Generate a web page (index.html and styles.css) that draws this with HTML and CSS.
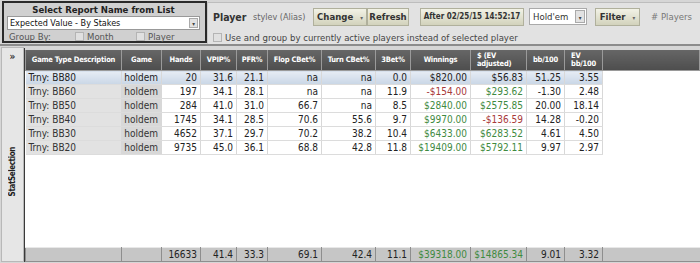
FILE: index.html
```html
<!DOCTYPE html>
<html lang="en">
<head>
  <meta charset="UTF-8">
  <title>Stats</title>
  <link rel="stylesheet" href="styles.css">
</head>
<body>
  <div class="topbar">
    <div class="report-box">
      <div class="report-title">Select Report Name from List</div>
      <div class="report-select">Expected Value - By Stakes<span class="drop">&#9662;</span></div>
      <div class="group-row">
        <span class="group-label">Group By:</span>
        <span class="check"></span><span class="check-label">Month</span>
        <span class="check check-2"></span><span class="check-label">Player</span>
      </div>
    </div>
    <div class="player-panel">
      <div class="player-row">
        <span class="player-label">Player</span>
        <span class="player-name">stylev (Alias)</span>
        <span class="btn btn-change">Change <span class="caret">&#9662;</span></span>
        <span class="btn btn-refresh">Refresh</span>
        <span class="btn btn-date">After 02/25/15 14:52:17</span>
        <span class="game-select">Hold'em<span class="drop">&#9662;</span></span>
        <span class="btn btn-filter">Filter <span class="caret">&#9662;</span></span>
        <span class="players">&#35; Players</span>
      </div>
      <div class="use-row">
        <span class="check"></span>
        <span class="use-label">Use and group by currently active players instead of selected player</span>
      </div>
    </div>
  </div>

  <div class="main">
    <div class="strip">
      <div class="strip-arrow">&raquo;</div>
      <div class="strip-text"><span>StatSelection</span></div>
    </div>
    <div class="grid">
      <table class="stats">
        <colgroup>
          <col style="width:96px"><col style="width:40px"><col style="width:39px"><col style="width:36px">
          <col style="width:31px"><col style="width:54px"><col style="width:54px"><col style="width:35px">
          <col style="width:60px"><col style="width:56px"><col style="width:38px"><col style="width:38px"><col>
        </colgroup>
        <thead>
          <tr>
            <th>Game Type Description</th><th>Game</th><th>Hands</th><th>VPIP%</th><th>PFR%</th>
            <th>Flop CBet%</th><th>Turn CBet%</th><th>3Bet%</th><th>Winnings</th>
            <th class="left">$ (EV<br>adjusted)</th><th>bb/100</th><th class="left">EV<br>bb/100</th><th></th>
          </tr>
        </thead>
        <tbody>
          <tr class="selected">
            <td class="desc">Trny: BB80</td><td class="game">holdem</td><td>20</td><td>31.6</td><td>21.1</td>
            <td>na</td><td>na</td><td>0.0</td><td>$820.00</td><td>$56.83</td><td>51.25</td><td>3.55</td><td class="empty"></td>
          </tr>
          <tr>
            <td class="desc">Trny: BB60</td><td class="game">holdem</td><td>197</td><td>34.1</td><td>28.1</td>
            <td>na</td><td>na</td><td>11.9</td><td class="neg">-$154.00</td><td class="pos">$293.62</td><td>-1.30</td><td>2.48</td><td class="empty"></td>
          </tr>
          <tr>
            <td class="desc">Trny: BB50</td><td class="game">holdem</td><td>284</td><td>41.0</td><td>31.0</td>
            <td>66.7</td><td>na</td><td>8.5</td><td class="pos">$2840.00</td><td class="pos">$2575.85</td><td>20.00</td><td>18.14</td><td class="empty"></td>
          </tr>
          <tr>
            <td class="desc">Trny: BB40</td><td class="game">holdem</td><td>1745</td><td>34.1</td><td>28.5</td>
            <td>70.6</td><td>55.6</td><td>9.7</td><td class="pos">$9970.00</td><td class="neg">-$136.59</td><td>14.28</td><td>-0.20</td><td class="empty"></td>
          </tr>
          <tr>
            <td class="desc">Trny: BB30</td><td class="game">holdem</td><td>4652</td><td>37.1</td><td>29.7</td>
            <td>70.2</td><td>38.2</td><td>10.4</td><td class="pos">$6433.00</td><td class="pos">$6283.52</td><td>4.61</td><td>4.50</td><td class="empty"></td>
          </tr>
          <tr>
            <td class="desc">Trny: BB20</td><td class="game">holdem</td><td>9735</td><td>45.0</td><td>36.1</td>
            <td>68.8</td><td>42.8</td><td>11.8</td><td class="pos">$19409.00</td><td class="pos">$5792.11</td><td>9.97</td><td>2.97</td><td class="empty"></td>
          </tr>
        </tbody>
      </table>
      <div class="filler"></div>
      <table class="totals">
        <colgroup>
          <col style="width:96px"><col style="width:40px"><col style="width:39px"><col style="width:36px">
          <col style="width:31px"><col style="width:54px"><col style="width:54px"><col style="width:35px">
          <col style="width:60px"><col style="width:56px"><col style="width:38px"><col style="width:38px"><col>
        </colgroup>
        <tr>
          <td></td><td></td><td>16633</td><td>41.4</td><td>33.3</td><td>69.1</td><td>42.4</td><td>11.1</td>
          <td class="pos">$39318.00</td><td class="pos">$14865.34</td><td>9.01</td><td>3.32</td><td class="rest"></td>
        </tr>
      </table>
    </div>
  </div>
</body>
</html>
```

FILE: styles.css
```css
body {
  margin: 0;
  width: 700px;
  height: 263px;
  overflow: hidden;
  background-color: #d6d6d6;
  font-family: "DejaVu Sans Condensed", "Liberation Sans", sans-serif;
  font-size: 10px;
  color: #222;
}
.topbar {
  display: flex;
  height: 44px;
  border-bottom: 2px solid #8c8c8c;
  background-color: #d6d6d6;
}
.report-box {
  box-sizing: border-box;
  flex-shrink: 0;
  width: 205px;
  height: 42px;
  margin: 1px 0 0 2px;
  border: 2px solid #2a2a2a;
  background-color: #d0d0d0;
  padding: 0 5px 0 3px;
}
.report-title {
  text-align: center;
  font-weight: bold;
  font-size: 9.5px;
  line-height: 13px;
  color: #222;
}
.report-select {
  position: relative;
  height: 12px;
  line-height: 12px;
  background-color: #fff;
  border: 1px solid #999;
  padding-left: 2px;
  font-size: 9px;
  color: #111;
}
.drop {
  position: absolute;
  right: 1px;
  top: 1px;
  width: 9px;
  height: 10px;
  line-height: 10px;
  background-color: #e2e2e2;
  border: 1px solid #aaa;
  box-sizing: border-box;
  font-size: 6px;
  text-align: center;
  color: #444;
}
.group-row {
  display: flex;
  align-items: center;
  height: 13px;
  color: #555;
  font-size: 9.5px;
}
.group-label {
  width: 66px;
  padding-left: 2px;
}
.check {
  flex-shrink: 0;
  display: inline-block;
  width: 7px;
  height: 7px;
  border: 1px solid #b4b4b4;
  background-color: #e0e0e0;
  margin-right: 3px;
}
.check-label {
  width: 44px;
}
.check-2 {
  margin-left: 5px;
}
.player-panel {
  flex: 1;
  margin: 2px 0 0 0;
  padding-left: 5px;
  background-color: #e2e2e2;
  border-top: 1px solid #bdbdbd;
  border-left: 1px solid #c8c8c8;
}
.player-row {
  display: flex;
  align-items: center;
  height: 27px;
}
.player-row > span {
  flex-shrink: 0;
}
.player-label {
  font-weight: bold;
  font-size: 10.5px;
  color: #333;
  width: 40px;
}
.player-name {
  color: #666;
  font-size: 9px;
  width: 60px;
}
.btn {
  box-sizing: border-box;
  height: 18px;
  line-height: 16px;
  border: 1px solid #b0b09c;
  background: linear-gradient(#f2f2e6, #d2d2bc);
  font-weight: bold;
  font-size: 9.5px;
  color: #333;
  text-align: center;
}
.btn-change {
  width: 54px;
}
.btn-refresh {
  width: 42px;
}
.btn-date {
  width: 104px;
  margin-left: 11px;
  font-size: 8px;
}
.btn-filter {
  width: 45px;
  margin-left: 8px;
}
.caret {
  font-size: 6px;
  color: #666;
  margin-left: 4px;
}
.game-select {
  position: relative;
  box-sizing: border-box;
  width: 58px;
  height: 17px;
  line-height: 15px;
  margin-left: 5px;
  padding-left: 3px;
  background-color: #fff;
  border: 1px solid #aaa;
  font-size: 9.5px;
  color: #333;
}
.game-select .drop {
  height: 13px;
  line-height: 13px;
  width: 10px;
}
.players {
  margin-left: 11px;
  color: #777;
  font-size: 9.5px;
}
.use-row {
  display: flex;
  align-items: center;
  height: 14px;
  color: #444;
  font-size: 9.5px;
}
.main {
  display: flex;
  height: 217px;
}
.strip {
  box-sizing: border-box;
  width: 23px;
  height: 215px;
  margin: 1px 0 0 1px;
  display: flex;
  flex-direction: column;
  background-color: #e6e6e6;
  border: 1px solid #b8b8b8;
}
.strip-arrow {
  height: 18px;
  line-height: 18px;
  text-align: center;
  font-weight: bold;
  font-size: 10px;
  color: #333;
}
.strip-text {
  flex: 1;
  display: flex;
  align-items: center;
  justify-content: center;
  padding-top: 16px;
}
.strip-text span {
  writing-mode: vertical-rl;
  transform: rotate(180deg);
  font-weight: bold;
  font-size: 8px;
  letter-spacing: -0.4px;
  color: #222;
}
.grid {
  flex: 1;
  display: flex;
  flex-direction: column;
  height: 214px;
  margin-top: 2px;
  background-color: #fff;
  border-left: 1px solid #3a3a3a;
}
table {
  width: 100%;
  table-layout: fixed;
  border-collapse: collapse;
}
.stats th {
  height: 20px;
  padding: 0;
  background: linear-gradient(#666, #4e4e4e);
  border: 1px solid #9a9a9a;
  border-top: 2px solid #d6d6d6;
  color: #fff;
  font-size: 7.5px;
  font-weight: bold;
  letter-spacing: -0.2px;
  line-height: 8px;
  text-align: center;
  white-space: nowrap;
}
.stats th.left {
  text-align: left;
  padding-left: 6px;
}
.stats td {
  height: 13px;
  padding: 0 3px 0 0;
  line-height: 13px;
  text-align: right;
  border-right: 1px solid #d8d8d8;
  border-bottom: 1px solid #dcdcdc;
  white-space: nowrap;
  color: #222;
}
.stats td.desc {
  text-align: left;
  padding-left: 3px;
  background-color: #e2e2e2;
  color: #333;
}
.stats td.game {
  text-align: right;
  background-color: #d8d8d8;
  color: #333;
}
.stats td.empty {
  border: none;
  background: #fff;
}
.stats tr.selected td {
  background: linear-gradient(#e6ecf4, #c9d6e6);
  color: #222;
}
.stats tr.selected td.empty {
  background: #fff;
}
.pos {
  color: #3f8a3f !important;
}
.neg {
  color: #a83a3a !important;
}
.filler {
  flex: 1;
}
.totals td {
  height: 13px;
  padding: 0 3px 0 0;
  line-height: 13px;
  text-align: right;
  background-color: #c6c6c6;
  border: 1px solid #8e8e8e;
  border-top-color: #e8e8e8;
  color: #222;
}
.totals td.rest {
  border-right: none;
}
```
